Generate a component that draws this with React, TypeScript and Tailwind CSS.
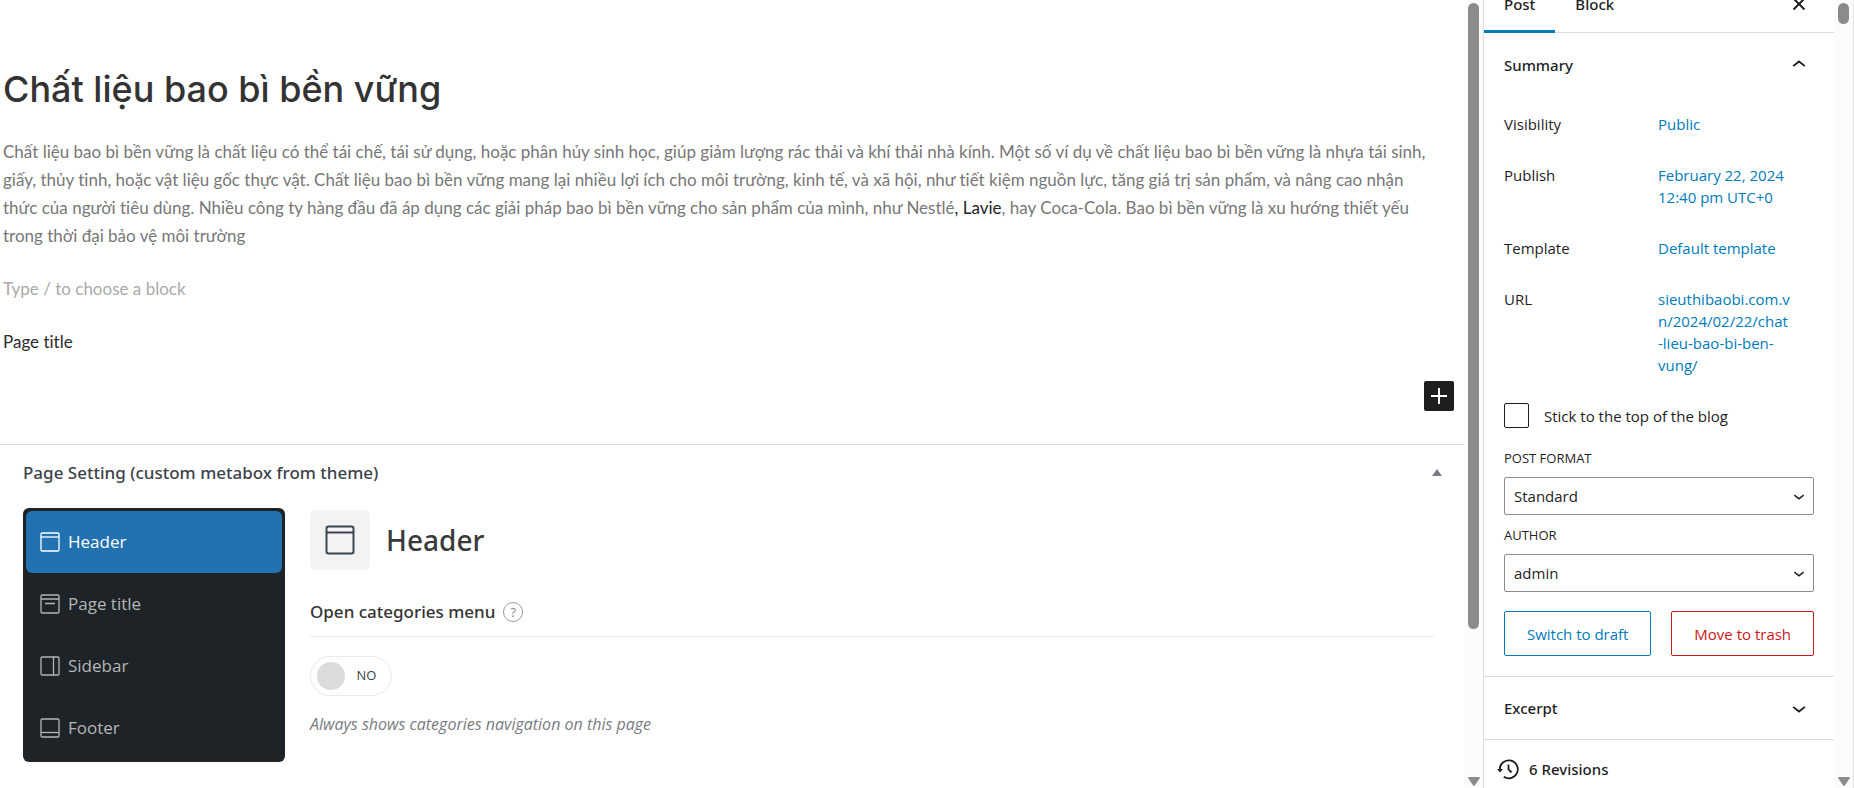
import type { ReactNode } from "react"
import { useState } from "react"

type PanelKind = "header" | "title" | "sidebar" | "footer"

const navItems: { kind: PanelKind; label: string }[] = [
  { kind: "header", label: "Header" },
  { kind: "title", label: "Page title" },
  { kind: "sidebar", label: "Sidebar" },
  { kind: "footer", label: "Footer" },
]

function PanelIcon({ kind, className }: { kind: PanelKind; className?: string }) {
  return (
    <svg className={className} viewBox="0 0 20 20" fill="none" stroke="currentColor" strokeWidth="1.3">
      <rect x="1" y="1" width="18" height="18" rx="1.2" />
      {kind === "header" && <path d="M1 5h18" />}
      {kind === "title" && <path d="M1 5h18M5 9.500h10" />}
      {kind === "sidebar" && <path d="M13.500 1v18" />}
      {kind === "footer" && <path d="M1 14.500h18" />}
    </svg>
  )
}

function Chevron({ up, className }: { up?: boolean; className?: string }) {
  return (
    <svg className={className} viewBox="0 0 24 24" fill="currentColor">
      {up ? (
        <path d="M6.500 12.400L12 8l5.500 4.400-.9 1.200L12 10l-4.500 3.600-1-1.200z" />
      ) : (
        <path d="M17.500 11.600L12 16l-5.500-4.400.9-1.200L12 14l4.500-3.600 1 1.200z" />
      )}
    </svg>
  )
}

function ScrollTrack({ children }: { children: ReactNode }) {
  return (
    <div className="flex w-[19px] shrink-0 flex-col items-center justify-between bg-[#fcfcfc] pt-[3px] pb-[2px]" aria-hidden="true">
      {children}
      <svg className="h-[9px] w-3 text-[#8b8b8b]" viewBox="0 0 12 9" fill="currentColor">
        <path d="M1 0h10q1.400 .3.600 1.500L7 8.300q-1 1-2 0L.4 1.500Q-.4.300 1 0z" />
      </svg>
    </div>
  )
}

function SummaryRow({ label, children }: { label: string; children: ReactNode }) {
  return (
    <div className="flex items-start">
      <span className="w-[154px] shrink-0">{label}</span>
      <a href="#" className="text-[#007cba]">
        {children}
      </a>
    </div>
  )
}

function SelectField({ id, label, value }: { id: string; label: string; value: string }) {
  return (
    <div>
      <label htmlFor={id} className="block pb-[10px] text-[13px] leading-[18px] font-medium uppercase">
        {label}
      </label>
      <div className="relative">
        <select id={id} className="block h-[38px] w-full appearance-none rounded-xs border border-[#8c8c8c] bg-white px-[9px]">
          <option>{value}</option>
        </select>
        <Chevron className="pointer-events-none absolute top-2 right-1 h-[22px] w-[22px]" />
      </div>
    </div>
  )
}

function Editor() {
  return (
    <section className="pt-[66px] pr-[10px] pl-[3px] font-[Lato,sans-serif] text-[17px] leading-7 text-[#2b2b2b] [font-variant-ligatures:none]">
      <h1 className="font-[Inter,sans-serif] text-[36px] leading-[46px] font-medium text-[#333]">Chất liệu bao bì bền vững</h1>
      <p className="mt-[26px] pr-[22px] text-[#777]">
        Chất liệu bao bì bền vững là chất liệu có thể tái chế, tái sử dụng, hoặc phân hủy sinh học, giúp giảm lượng rác
        thải và khí thải nhà kính. Một số ví dụ về chất liệu bao bì bền vững là nhựa tái sinh, giấy, thủy tinh, hoặc
        vật liệu gốc thực vật. Chất liệu bao bì bền vững mang lại nhiều lợi ích cho môi trường, kinh tế, và xã hội, như
        tiết kiệm nguồn lực, tăng giá trị sản phẩm, và nâng cao nhận thức của người tiêu dùng. Nhiều công ty hàng đầu đã
        áp dụng các giải pháp bao bì bền vững cho sản phẩm của mình, như Nestlé<span className="text-[#222]">, Lavie</span>,
        hay Coca-Cola. Bao bì bền vững là xu hướng thiết yếu trong thời đại bảo vệ môi trường
      </p>
      <p className="mt-[25px] text-[#aaa]">Type / to choose a block</p>
      <p className="mt-[25px]">Page title</p>
      <div className="flex justify-end pt-[25px] pb-[33px]">
        <button type="button" aria-label="Add block" className="flex h-[30px] w-[30px] items-center justify-center rounded-xs bg-[#1e1e1e] text-white">
          <svg className="h-4 w-4" viewBox="0 0 16 16" stroke="currentColor" strokeWidth="2">
            <path d="M8 0v16M0 8h16" />
          </svg>
        </button>
      </div>
    </section>
  )
}

function PageSetting() {
  const [active, setActive] = useState<PanelKind>("header")

  return (
    <section className="border-t border-[#dcdcde] pr-[30px] pl-[23px] text-[#3c434a]">
      <div className="flex h-[63px] items-center justify-between pb-2">
        <h2 className="font-['Noto_Sans',sans-serif] text-[17px] leading-6 font-medium">Page Setting (custom metabox from theme)</h2>
        <button type="button" aria-label="Toggle panel" className="-mr-4 p-2 text-[#787c82]">
          <svg className="h-[7px] w-[10px]" viewBox="0 0 10 7" fill="currentColor">
            <path d="M5 0l5 7H0z" />
          </svg>
        </button>
      </div>
      <div className="flex items-start gap-[25px]">
        <nav className="w-[262px] shrink-0 rounded-md bg-[#1d2327] p-[3px]">
          {navItems.map((item) => (
            <button
              key={item.kind}
              type="button"
              onClick={() => setActive(item.kind)}
              className={`flex h-[62px] w-full items-center gap-2 rounded-md px-[14px] text-[17px] ${
                active === item.kind ? "bg-[#2271b1] text-white" : "text-[#b4b6b8]"
              }`}
            >
              <PanelIcon kind={item.kind} className="h-5 w-5" />
              {item.label}
            </button>
          ))}
        </nav>
        <div className="min-w-0 flex-1 pt-[2px]">
          <div className="flex items-center gap-4">
            <span className="flex h-[60px] w-[60px] items-center justify-center rounded-md bg-[#f3f3f3]">
              <PanelIcon kind="header" className="h-[30px] w-[30px]" />
            </span>
            <h3 className="font-['Noto_Sans',sans-serif] text-[28px] leading-9 font-medium text-[#3a3a3a]">Header</h3>
          </div>
          <div className="mt-[30px] flex h-[37px] items-start gap-2 border-b border-[#ebebeb]">
            <h4 className="font-['Noto_Sans',sans-serif] text-[17px] leading-6 font-medium text-[#333]">Open categories menu</h4>
            <button type="button" aria-label="Help" className="mt-[2px] h-5 w-5 rounded-full border border-[#999] text-[13px] leading-[18px] text-[#888]">
              ?
            </button>
          </div>
          <button type="button" role="switch" aria-checked="false" className="mt-[19px] flex h-10 w-[82px] items-center rounded-full border border-[#e9e9e9] pr-[3px] pl-[6px] text-[13px] font-medium">
            <span className="h-7 w-7 rounded-full bg-[#dcdcde]" />
            <span className="flex-1 text-center">NO</span>
          </button>
          <p className="mt-4 text-base leading-6 text-[#787c82] italic">Always shows categories navigation on this page</p>
        </div>
      </div>
    </section>
  )
}

function SettingsPanel() {
  return (
    <aside className="w-[351px] shrink-0 border-l border-[#ddd] text-[15px] leading-[22px] text-[#1e1e1e]">
      <div className="-mt-[25px] flex h-[58px] border-b border-[#ddd] font-['Noto_Sans',sans-serif] font-medium">
        <button type="button" className="-mb-px border-b-3 border-[#007cba] px-5 pt-[3px]">
          Post
        </button>
        <button type="button" className="px-5">
          Block
        </button>
        <button type="button" aria-label="Close settings" className="mr-[23px] ml-auto">
          <svg className="h-6 w-6" viewBox="0 0 24 24" stroke="currentColor" strokeWidth="2">
            <path d="M6.500 6.500l11 11M17.500 6.500l-11 11" />
          </svg>
        </button>
      </div>
      <div className="border-b border-[#ddd] px-5 pt-[18px] pb-5">
        <button type="button" className="flex w-full items-center justify-between pr-px font-['Noto_Sans',sans-serif] font-medium">
          Summary
          <Chevron up className="h-7 w-7" />
        </button>
        <div className="mt-[34px] flex flex-col gap-[29px]">
          <SummaryRow label="Visibility">Public</SummaryRow>
          <SummaryRow label="Publish">
            February 22, 2024
            <br />
            12:40 pm UTC+0
          </SummaryRow>
          <SummaryRow label="Template">Default template</SummaryRow>
          <SummaryRow label="URL">
            sieuthibaobi.com.v
            <br />
            n/2024/02/22/chat
            <br />
            -lieu-bao-bi-ben-
            <br />
            vung/
          </SummaryRow>
        </div>
        <label className="mt-[27px] flex items-center gap-[15px]">
          <input type="checkbox" className="h-[25px] w-[25px] appearance-none rounded-xs border border-[#1e1e1e]" />
          Stick to the top of the blog
        </label>
        <div className="mt-[21px] flex flex-col gap-[11px]">
          <SelectField id="post-format" label="Post format" value="Standard" />
          <SelectField id="author" label="Author" value="admin" />
        </div>
        <div className="mt-[19px] flex gap-5">
          <button type="button" className="h-[45px] flex-auto rounded-xs border border-[#007cba] px-4 text-[#007cba]">
            Switch to draft
          </button>
          <button type="button" className="h-[45px] flex-auto rounded-xs border border-[#cc1818] px-4 text-[#cc1818]">
            Move to trash
          </button>
        </div>
      </div>
      <button type="button" className="flex h-[63px] w-full items-center justify-between border-b border-[#ddd] pr-[21px] pl-5 font-['Noto_Sans',sans-serif] font-medium">
        Excerpt
        <Chevron className="h-7 w-7" />
      </button>
      <button type="button" className="flex h-[58px] w-full items-center gap-[9px] pl-3 font-['Noto_Sans',sans-serif] font-medium">
        <svg className="h-6 w-6" viewBox="0 0 24 24" fill="none" stroke="currentColor" strokeWidth="1.800">
          <path d="M3.800 13a9 9 0 1 1 4 6.800M12.500 7.500v5l3 3" />
          <path d="M1 12h6l-3 3.500z" fill="currentColor" stroke="none" />
        </svg>
        6 Revisions
      </button>
    </aside>
  )
}

export default function App() {
  return (
    <div className="flex h-screen overflow-hidden bg-white font-['Open_Sans','Noto_Sans',sans-serif]">
      <main className="min-w-0 flex-1">
        <Editor />
        <PageSetting />
      </main>
      <ScrollTrack>
        <div className="h-[80%] w-[11px] rounded-full bg-[#8b8b8b]" />
      </ScrollTrack>
      <SettingsPanel />
      <ScrollTrack>
        <div className="h-[21px] w-[11px] rounded-full bg-[#8b8b8b]" />
      </ScrollTrack>
      <div className="w-px bg-[#e4e4e4]" />
    </div>
  )
}
